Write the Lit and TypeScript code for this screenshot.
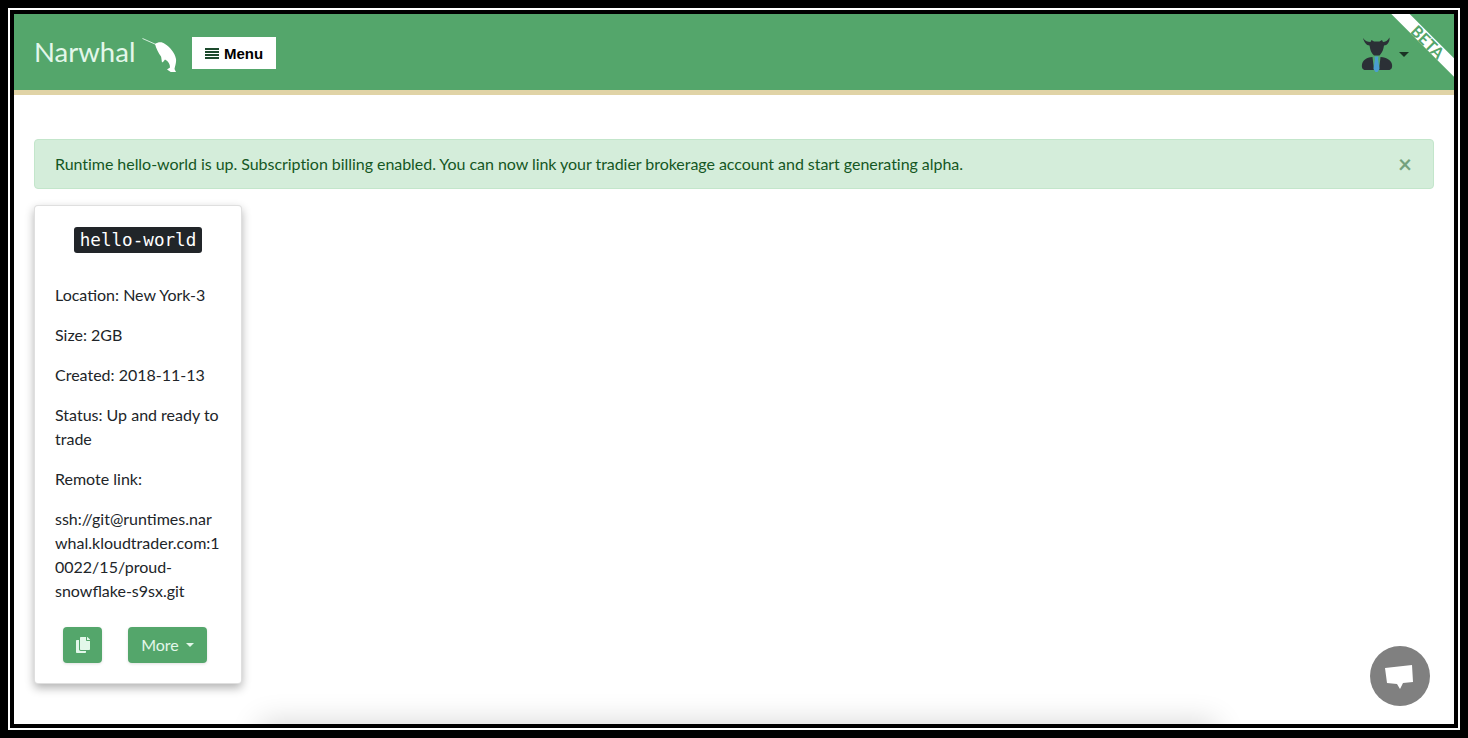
import { LitElement, html, css } from "lit";
import { customElement } from "lit/decorators.js";

@customElement("app-root")
export class AppRoot extends LitElement {
  static styles = css`
    :host { display: block; width: 1468px; height: 738px; font-family: Lato, "Open Sans", sans-serif; font-size: 16px; line-height: 24px; color: #212529; }
    * { box-sizing: border-box; }
    .frame { width: 100%; height: 100%; border: 8px solid #000; }
    .frame-inner { width: 100%; height: 100%; border: 2px solid #fff; }
    .page { position: relative; width: 100%; height: 100%; border: 4px solid #000; background: #fff; overflow: hidden; }
    .content { position: relative; width: 100%; height: 100%; overflow: hidden; }
    nav { display: flex; align-items: center; height: 81px; padding: 0 45px 0 20px; background: #54a66b; border-bottom: 5px solid #e0d3a6; }
    .brand { width: 101px; font-size: 27.5px; font-weight: 400; line-height: 40px; color: #e3f7ea; white-space: nowrap; }
    .narwhal { margin-left: 5px; flex: none; }
    .menu { display: flex; align-items: center; gap: 5px; height: 32px; width: 84px; margin: 2px 0 0 12px; padding-left: 13px; background: #fff; color: #000; font: bold 15px/1 "Liberation Sans", Arial, sans-serif; }
    .spacer { flex: 1; }
    .user { display: flex; align-items: center; gap: 5px; }
    .caret { width: 0; height: 0; margin-top: 5px; border-left: 5px solid transparent; border-right: 5px solid transparent; border-top: 5px solid #1a3324; }
    .ribbon { position: absolute; top: 20.5px; right: -29px; width: 110px; height: 13px; transform: rotate(45deg); background: #fff; color: #54a66b; font-size: 16px; font-weight: 700; line-height: 13px; text-align: center; }
    main { padding: 44px 20px 0; }
    .alert { display: flex; justify-content: space-between; align-items: center; height: 50px; margin-bottom: 16px; padding: 0 20px; background: #d4edda; border: 1px solid #c3e6cb; border-radius: 4px; color: #155724; letter-spacing: -0.045px; }
    .close { font: bold 24px/1 Lato, sans-serif; color: #155724; opacity: .5; margin-right: 1px; }
    .card { width: 208px; height: 479px; padding: 21px 20px 0; background: #fff; border: 1px solid rgba(0,0,0,.125); border-radius: 4px; box-shadow: 0 4px 10px rgba(0,0,0,.3); }
    .name { display: flex; justify-content: center; margin-bottom: 30px; }
    code { display: block; height: 26px; padding: 0 6px; background: #212529; color: #fff; border-radius: 3px; font: 17.6px/26px "DejaVu Sans Mono", monospace; }
    p { margin: 0 0 16px; overflow-wrap: break-word; }
    .actions { display: flex; gap: 26px; margin-top: 24px; padding-left: 8px; }
    .btn { display: flex; align-items: center; justify-content: center; height: 36px; border-radius: 4px; background: #54a66b; color: #e3f7ea; box-shadow: 0 1px 3px rgba(0,0,0,.12); }
    .copy { width: 39px; }
    .more { width: 79px; gap: 7px; }
    .more i { width: 0; height: 0; margin-top: -1px; border-left: 4.5px solid transparent; border-right: 4.5px solid transparent; border-top: 4.5px solid #e3f7ea; }
    .chat { position: absolute; right: 24px; bottom: 18px; width: 60px; height: 60px; border-radius: 50%; background: #808080; }
    .glow { position: absolute; left: 252px; bottom: -24px; width: 944px; height: 20px; box-shadow: 0 0 30px 6px rgba(0,0,0,.16); }
  `;

  render() {
    return html`
      <div class="frame"><div class="frame-inner"><div class="page"><div class="content">
        <nav>
          <span class="brand">Narwhal</span>
          <svg class="narwhal" width="40" height="40" viewBox="140 32 40 40">
            <path d="M142.5 38.5 L156 44.5" stroke="#e3f7ea" stroke-width=".9" fill="none"/>
            <path d="M155 44 C158 42 162 41.5 165 44 C170 47 175 53 176 59 C176.5 63 175 66 174.5 69 L176 72 L171.5 72.5 L167 69.5 L170 67.5 C170 64 168.5 61.5 165 59.5 C164 61 163 62 162 62.5 C161.5 60 161.5 58 161 56.5 C158.5 53 156 48 155 44 Z" fill="#fff"/>
          </svg>
          <div class="menu">
            <svg width="14" height="11" viewBox="0 0 14 11"><path d="M0 0h14v2H0zM0 3h14v2H0zM0 6h14v2H0zM0 9h14v2H0z" fill="#1d4a2d"/></svg>
            <span>Menu</span>
          </div>
          <div class="spacer"></div>
          <div class="user">
            <svg width="34" height="40" viewBox="1360 32 34 40">
              <path d="M1363 38 C1365 41 1368 42 1370.5 42 L1371.5 40 L1374 41.5 L1379.5 41.5 L1382 40 L1383 42 C1385 42 1388 40.5 1389.5 37.5 C1390 42 1387 45.5 1384 45.5 L1383.5 48 C1383 51 1381 54 1379.5 55.5 L1374 55.5 C1372 54 1370.5 51 1370 48 L1369.5 45.5 C1366.5 45.5 1364 42 1363 38 Z" fill="#2b3036"/>
              <path d="M1372.5 57 C1373 61 1373.5 66 1374 70 L1365.5 70 C1362.5 70 1361.5 67.5 1362 64.5 C1362.5 60.5 1366 57.5 1372.5 57 Z M1380.5 57 C1380 61 1379.5 66 1379 70 L1388.5 70 C1391.5 70 1392.5 67.5 1392 64.5 C1391.5 60.5 1387 57.5 1380.5 57 Z" fill="#2b3036"/>
              <path d="M1374.5 56.5 L1378.5 56.5 L1378 59 L1379.5 69 L1376.5 73.5 L1373.5 69 L1375 59 Z" fill="#4a9fd0"/>
            </svg>
            <i class="caret"></i>
          </div>
        </nav>
        <div class="ribbon">BETA</div>
        <main>
          <div class="alert">
            <span>Runtime hello-world is up. Subscription billing enabled. You can now link your tradier brokerage account and start generating alpha.</span>
            <span class="close">×</span>
          </div>
          <div class="card">
            <div class="name"><code>hello-world</code></div>
            <p>Location: New York-3</p>
            <p>Size: 2GB</p>
            <p>Created: 2018-11-13</p>
            <p>Status: Up and ready to trade</p>
            <p>Remote link:</p>
            <p>ssh://git@runtimes.narwhal.kloudtrader.com:10022/15/proud-snowflake-s9sx.git</p>
            <div class="actions">
              <div class="btn copy">
                <svg width="14" height="16" viewBox="0 0 448 512"><path fill="#e3f7ea" d="M320 448v40c0 13.255-10.745 24-24 24H24c-13.255 0-24-10.745-24-24V120c0-13.255 10.745-24 24-24h72v296c0 30.879 25.121 56 56 56h168zm0-344V0H152c-13.255 0-24 10.745-24 24v368c0 13.255 10.745 24 24 24h272c13.255 0 24-10.745 24-24V128H344c-13.2 0-24-10.8-24-24zm120.971-31.029L375.029 7.029A24 24 0 0 0 358.059 0H352v96h96v-6.059a24 24 0 0 0-7.029-16.97z"/></svg>
              </div>
              <div class="btn more"><span>More</span><i></i></div>
            </div>
          </div>
        </main>
        <div class="glow"></div>
        <div class="chat">
          <svg width="60" height="60" viewBox="1370 646 60 60"><path d="M1385 668 L1412 665 L1413 682 L1403 683 L1400 689 L1397 684 L1387 683 Z" fill="#fff"/></svg>
        </div>
      </div></div></div></div>
    `;
  }
}
